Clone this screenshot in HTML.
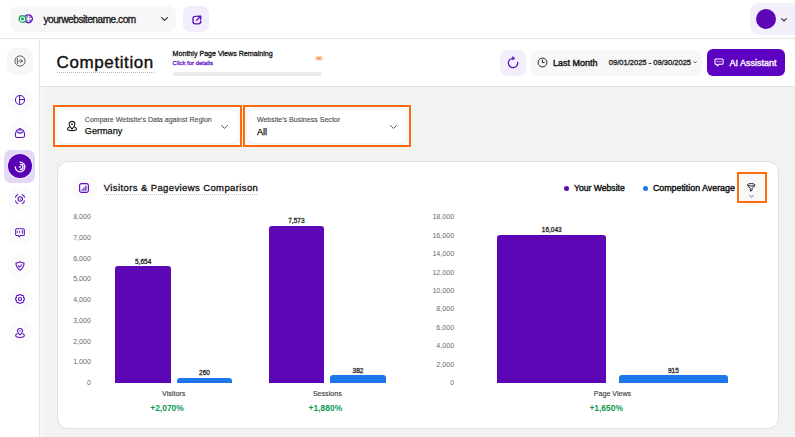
<!DOCTYPE html><html><head><meta charset='utf-8'><style>
*{margin:0;padding:0;box-sizing:border-box}
html,body{width:795px;height:437px;overflow:hidden;background:#f2f2f2;font-family:"Liberation Sans",sans-serif}
.t{position:absolute;line-height:1;white-space:nowrap}
.a{position:absolute}
svg{position:absolute;overflow:visible}
</style></head><body>
<div class="a" style="left:0;top:0;width:795px;height:39px;background:#fff;border-bottom:1px solid #e6e6e6"></div>
<div class="a" style="left:10px;top:6px;width:166px;height:26px;background:#f7f7f8;border-radius:8px"></div>
<svg style="left:15px;top:8px" width="25" height="22" viewBox="0 0 25 22">
<circle cx="13.4" cy="10.8" r="3.9" fill="#a88ae6" stroke="#5a10be" stroke-width="1.35"/>
<path d="M13.4 7.4 V14.2 M9.8 10.8 H17" stroke="#fff" stroke-width="1"/>
<circle cx="7.5" cy="11" r="3.3" fill="#fff" stroke="#1faa66" stroke-width="1.35"/>
<circle cx="7.5" cy="11" r="1.45" fill="#0f9a52"/>
</svg>
<div class="t" style="left:43.40px;top:14.95px;font-size:10.1px;font-weight:400;color:#1a1a1a;letter-spacing:-0.45px;-webkit-text-stroke:0.35px #1a1a1a">yourwebsitename.com</div>

<svg style="left:160.5px;top:17px" width="7" height="4" viewBox="0 0 7 4"><path d="M0.6 0.6 L3.5 3.4 L6.4 0.6" fill="none" stroke="#333" stroke-width="1.2" stroke-linecap="round" stroke-linejoin="round"/></svg>
<div class="a" style="left:183px;top:6px;width:26px;height:26px;background:#f2edfc;border-radius:7px"></div>
<svg style="left:191.6px;top:14.6px" width="10" height="10" viewBox="0 0 10 10">
<path d="M4.3 1.3 H3.3 Q1 1.3 1 3.6 V6.6 Q1 8.9 3.3 8.9 H6.4 Q8.7 8.9 8.7 6.6 V5.9" fill="none" stroke="#5a10be" stroke-width="1.35" stroke-linecap="round"/>
<path d="M4.7 5.3 L8.2 1.8" fill="none" stroke="#5a10be" stroke-width="1.35" stroke-linecap="round"/>
<path d="M5.7 1.3 H8.7 V4.3" fill="none" stroke="#5a10be" stroke-width="1.4" stroke-linecap="round" stroke-linejoin="round"/>
</svg>
<div class="a" style="left:750px;top:3px;width:50px;height:32px;background:#f3effa;border-radius:9px"></div>
<div class="a" style="left:756px;top:9px;width:20px;height:20px;background:#5c06b6;border-radius:50%"></div>
<svg style="left:781px;top:17.5px" width="6" height="3.5" viewBox="0 0 6 3.5"><path d="M0.6 0.6 L3.0 2.9 L5.4 0.6" fill="none" stroke="#333" stroke-width="1.2" stroke-linecap="round" stroke-linejoin="round"/></svg>
<div class="a" style="left:0;top:39px;width:40px;height:398px;background:#fff;border-right:1px solid #e6e6e6"></div>
<div class="a" style="left:7px;top:48px;width:26px;height:26.5px;background:#f7f7f7;border-radius:8px"></div>
<svg style="left:14px;top:54.6px" width="12" height="12" viewBox="0 0 12 12">
<circle cx="6" cy="6" r="5.1" fill="none" stroke="#555" stroke-width="0.95"/>
<path d="M3.4 3.4 V8.6" stroke="#555" stroke-width="0.95" stroke-linecap="round"/>
<path d="M4.9 6 H8.3 M6.6 4.4 L8.3 6 L6.6 7.6" fill="none" stroke="#555" stroke-width="0.95" stroke-linecap="round" stroke-linejoin="round"/>
</svg>
<div class="a" style="left:7.60px;top:87.50px;width:25px;height:25px;background:#fbfbfb;border-radius:50%"></div>
<svg style="left:15.10px;top:95.00px" width="10" height="10" viewBox="0 0 10 10"><circle cx="5" cy="5" r="4.55" fill="none" stroke="#5a12c0" stroke-width="1.05"/><path d="M4.6 0.6 V9.4 M4.6 4.5 H9.4" stroke="#5a12c0" stroke-width="1.05" fill="none"/></svg>
<div class="a" style="left:7.60px;top:120.80px;width:25px;height:25px;background:#fbfbfb;border-radius:50%"></div>
<svg style="left:15.10px;top:128.30px" width="10" height="10" viewBox="0 0 10 10"><path d="M2.6 1.9 H7.4 Q8.2 1.9 8.6 2.8 L9.3 5 Q9.6 6 9.6 7.1 V7.6 Q9.6 9.5 7.7 9.5 H2.3 Q0.4 9.5 0.4 7.6 V7.1 Q0.4 6 0.7 5 L1.4 2.8 Q1.8 1.9 2.6 1.9 Z" fill="none" stroke="#5a12c0" stroke-width="1.05" stroke-linejoin="round"/><path d="M3.7 1.9 Q3.7 0.5 5 0.5 Q6.3 0.5 6.3 1.9" fill="none" stroke="#5a12c0" stroke-width="1.05"/><path d="M2.4 4 Q5 6.3 7.6 4" fill="none" stroke="#5a12c0" stroke-width="1.05" stroke-linecap="round"/></svg>
<div class="a" style="left:4.3px;top:149.7px;width:31px;height:33px;background:#e4d8f6;border-radius:7px"></div>
<div class="a" style="left:7.3px;top:153.3px;width:26px;height:26px;background:#efe8fb;border-radius:50%"></div>
<div class="a" style="left:8.3px;top:154.3px;width:24px;height:24px;background:#5800b6;border-radius:50%"></div>
<svg style="left:14.3px;top:160.5px" width="12" height="12" viewBox="0 0 12 12">
<path d="M6.1 1.2 A4.8 4.8 0 1 1 1.3 6" fill="none" stroke="#fff" stroke-width="1.3" stroke-linecap="round"/>
<path d="M6.4 3.4 A2.55 2.55 0 0 1 6.4 8.5" fill="none" stroke="#fff" stroke-width="1.3" stroke-linecap="round"/>
<path d="M5.3 5.9 H6.5" stroke="#fff" stroke-width="1.3" stroke-linecap="round"/>
</svg>
<div class="a" style="left:7.60px;top:186.90px;width:25px;height:25px;background:#fbfbfb;border-radius:50%"></div>
<svg style="left:15.10px;top:194.40px" width="10" height="10" viewBox="0 0 10 10"><path d="M0.6 3.3 Q0.6 1.2 2.8 0.7 M7.2 0.7 Q9.4 1.2 9.4 3.3 M9.4 6.7 Q9.4 8.8 7.2 9.4 M2.8 9.4 Q0.6 8.8 0.6 6.7" fill="none" stroke="#5a12c0" stroke-width="1.05" stroke-linecap="round"/><circle cx="5.3" cy="5" r="2.2" fill="none" stroke="#5a12c0" stroke-width="1.05"/><circle cx="5.4" cy="5.1" r="0.65" fill="#5a12c0"/></svg>
<div class="a" style="left:7.60px;top:220.10px;width:25px;height:25px;background:#fbfbfb;border-radius:50%"></div>
<svg style="left:15.10px;top:227.60px" width="10" height="10" viewBox="0 0 10 10"><path d="M1.8 0.8 H8.2 Q9.3 0.8 9.3 1.9 V6.4 Q9.3 7.5 8.2 7.5 H5.2 L4.2 8.9 L3.2 7.5 H1.8 Q0.7 7.5 0.7 6.4 V1.9 Q0.7 0.8 1.8 0.8 Z" fill="none" stroke="#5a12c0" stroke-width="1.05" stroke-linejoin="round"/><path d="M2.4 3.6 V4.4 M4.5 3.6 V4.4 M7.3 2.5 V5.3" stroke="#5a12c0" stroke-width="1" stroke-linecap="round"/></svg>
<div class="a" style="left:7.60px;top:253.50px;width:25px;height:25px;background:#fbfbfb;border-radius:50%"></div>
<svg style="left:15.10px;top:261.00px" width="10" height="10" viewBox="0 0 10 10"><path d="M5 0.6 L6 1.3 Q7.4 2 9 2.1 Q9.2 6.4 5 9.4 Q0.8 6.4 1 2.1 Q2.6 2 4 1.3 Z" fill="none" stroke="#5a12c0" stroke-width="1.05" stroke-linejoin="round"/><path d="M3.2 4.9 L4.5 6 L6.7 3.9" fill="none" stroke="#5a12c0" stroke-width="1.05" stroke-linecap="round" stroke-linejoin="round"/></svg>
<div class="a" style="left:7.60px;top:286.90px;width:25px;height:25px;background:#fbfbfb;border-radius:50%"></div>
<svg style="left:15.10px;top:294.40px" width="10" height="10" viewBox="0 0 10 10"><path d="M5 0.5 Q6.2 0.5 6.6 1.6 Q7.7 1.1 8.5 2 Q9.1 2.9 8.4 3.6 Q9.5 4.2 9.5 5 Q9.5 5.8 8.4 6.4 Q9.1 7.1 8.5 8 Q7.7 8.9 6.6 8.4 Q6.2 9.5 5 9.5 Q3.8 9.5 3.4 8.4 Q2.3 8.9 1.5 8 Q0.9 7.1 1.6 6.4 Q0.5 5.8 0.5 5 Q0.5 4.2 1.6 3.6 Q0.9 2.9 1.5 2 Q2.3 1.1 3.4 1.6 Q3.8 0.5 5 0.5 Z" fill="none" stroke="#5a12c0" stroke-width="1.1" stroke-linejoin="round"/><circle cx="5" cy="5" r="1.6" fill="none" stroke="#5a12c0" stroke-width="1.05"/></svg>
<div class="a" style="left:7.60px;top:320.00px;width:25px;height:25px;background:#fbfbfb;border-radius:50%"></div>
<svg style="left:15.10px;top:327.50px" width="10" height="10" viewBox="0 0 10 10"><path d="M5 6.9 Q2.5 4.6 2.5 2.9 A2.5 2.5 0 0 1 7.5 2.9 Q7.5 4.6 5 6.9 Z" fill="none" stroke="#5a12c0" stroke-width="1.05" stroke-linejoin="round"/><circle cx="5" cy="2.9" r="0.7" fill="#5a12c0"/><path d="M2.2 5.8 Q0.6 6.6 0.6 7.5 Q0.6 9.4 5 9.4 Q9.4 9.4 9.4 7.5 Q9.4 6.6 7.8 5.8" fill="none" stroke="#5a12c0" stroke-width="1.05" stroke-linecap="round"/></svg>
<div class="a" style="left:40px;top:87px;width:4px;height:350px;background:#f6f6f6"></div>
<div class="a" style="left:40px;top:39px;width:755px;height:48px;background:#fff;border-bottom:1px solid #e3e3e3"></div>
<div class="t" style="left:56.60px;top:53.61px;font-size:17px;font-weight:400;color:#111;letter-spacing:0.6px;-webkit-text-stroke:0.4px #111">Competition</div>

<div class="a" style="left:57px;top:72px;width:97px;height:1px;background:repeating-linear-gradient(90deg,#b8b8b8 0 1px,transparent 1px 2px)"></div>
<div class="t" style="left:172.60px;top:50.79px;font-size:7.1px;font-weight:400;color:#1a1a1a;-webkit-text-stroke:0.3px #1a1a1a">Monthly Page Views Remaining</div>

<div class="t" style="left:172.60px;top:60.96px;font-size:5.95px;font-weight:400;color:#6a1fd0;-webkit-text-stroke:0.3px #6a1fd0">Click for details</div>

<div class="a" style="left:172.5px;top:72px;width:149.5px;height:4px;background:#ebebeb;border-radius:2px"></div>
<svg style="left:315px;top:56px" width="8" height="5" viewBox="0 0 8 5">
<circle cx="2.6" cy="2.35" r="1.35" fill="none" stroke="#ff6a0c" stroke-width="0.95"/>
<circle cx="5.4" cy="2.35" r="1.35" fill="none" stroke="#ff6a0c" stroke-width="0.95"/>
</svg>
<div class="a" style="left:500px;top:49.5px;width:26px;height:26px;background:#f3eefc;border-radius:7px"></div>
<svg style="left:506.6px;top:56.8px" width="12" height="12" viewBox="0 0 12 12">
<path d="M6.2 1.3 A4.7 4.7 0 1 0 10.7 5.4" fill="none" stroke="#5a10be" stroke-width="1.25" stroke-linecap="round"/>
<path d="M5.6 -0.4 L7.9 1.3 L5.6 3 Z" fill="#5a10be" stroke="#5a10be" stroke-width="0.5" stroke-linejoin="round"/>
</svg>
<div class="a" style="left:531px;top:49.5px;width:171px;height:26px;background:#f7f7f8;border-radius:7px"></div>
<svg style="left:537px;top:57px" width="11" height="11" viewBox="0 0 11 11">
<circle cx="5.5" cy="5.5" r="4.4" fill="none" stroke="#222" stroke-width="1"/>
<path d="M5.4 3 V5.6 H7.2" fill="none" stroke="#222" stroke-width="1" stroke-linecap="round" stroke-linejoin="round"/>
</svg>
<div class="t" style="left:553.00px;top:58.78px;font-size:9.0px;font-weight:400;color:#111;-webkit-text-stroke:0.4px #111">Last Month</div>

<div class="t" style="left:608.80px;top:58.51px;font-size:7.55px;font-weight:400;color:#2a2a2a;-webkit-text-stroke:0.35px #2a2a2a">09/01/2025 - 09/30/2025</div>

<svg style="left:693.3px;top:61px" width="4" height="2.5" viewBox="0 0 4 2.5"><path d="M0.6 0.6 L2.0 1.9 L3.4 0.6" fill="none" stroke="#555" stroke-width="0.9" stroke-linecap="round" stroke-linejoin="round"/></svg>
<div class="a" style="left:707px;top:49.4px;width:78px;height:26.5px;background:#5e02c2;border-radius:6px"></div>
<svg style="left:713.5px;top:58px" width="10" height="9" viewBox="0 0 10 9">
<path d="M2 0.9 H8.1 Q9.1 0.9 9.1 1.9 V5.3 Q9.1 6.3 8.1 6.3 H4.8 L3.3 7.9 L2.9 6.3 H2 Q1 6.3 1 5.3 V1.9 Q1 0.9 2 0.9 Z" fill="none" stroke="#fff" stroke-width="1.05" stroke-linejoin="round"/>
<circle cx="3.2" cy="3.7" r="0.6" fill="#fff"/><circle cx="5.1" cy="3.7" r="0.6" fill="#fff"/><circle cx="7" cy="3.7" r="0.6" fill="#fff"/>
</svg>
<div class="t" style="left:729.60px;top:59.28px;font-size:9.0px;font-weight:400;color:#fff;-webkit-text-stroke:0.35px #fff">AI Assistant</div>

<div class="a" style="left:52.5px;top:105.1px;width:189.0px;height:42.2px;border:2.85px solid #ff6a0c;background:#f6fafb"></div>
<div class="a" style="left:56.5px;top:109.5px;width:181.0px;height:33.3px;background:#fff;border-radius:7px;box-shadow:0 0 1.5px rgba(0,0,0,0.12)"></div>
<svg style="left:66.6px;top:121.4px" width="10" height="10" viewBox="0 0 10 10">
<path d="M5 8.1 Q2.1 5.4 2.1 3.3 A2.9 2.9 0 0 1 7.9 3.3 Q7.9 5.4 5 8.1 Z" fill="none" stroke="#1e1e1e" stroke-width="1.1" stroke-linejoin="round"/>
<circle cx="5" cy="3.2" r="0.85" fill="#1e1e1e"/>
<path d="M2.1 6.3 Q0.5 7 0.5 7.9 Q0.5 9.6 5 9.6 Q9.5 9.6 9.5 7.9 Q9.5 7 7.9 6.3" fill="none" stroke="#1e1e1e" stroke-width="1.1" stroke-linecap="round"/>
</svg>
<div class="t" style="left:84.80px;top:116.43px;font-size:7.05px;font-weight:400;color:#4a4a4a;-webkit-text-stroke:0.1px #4a4a4a">Compare Website's Data against Region</div>

<div class="t" style="left:84.80px;top:127.05px;font-size:9.15px;font-weight:400;color:#111;-webkit-text-stroke:0.25px #111">Germany</div>

<svg style="left:220.5px;top:124.5px" width="7" height="4" viewBox="0 0 7 4"><path d="M0.6 0.6 L3.5 3.4 L6.4 0.6" fill="none" stroke="#555" stroke-width="1" stroke-linecap="round" stroke-linejoin="round"/></svg>
<div class="a" style="left:242.6px;top:105.1px;width:168.4px;height:42.2px;border:2.85px solid #ff6a0c;background:#f6fafb"></div>
<div class="a" style="left:246.6px;top:109.5px;width:160.4px;height:33.3px;background:#fff;border-radius:7px;box-shadow:0 0 1.5px rgba(0,0,0,0.12)"></div>
<div class="t" style="left:256.90px;top:116.22px;font-size:7.07px;font-weight:400;color:#4a4a4a;-webkit-text-stroke:0.1px #4a4a4a">Website's Business Sector</div>

<div class="t" style="left:256.90px;top:127.81px;font-size:9.2px;font-weight:400;color:#111;-webkit-text-stroke:0.25px #111">All</div>

<svg style="left:389.5px;top:124.5px" width="7" height="4" viewBox="0 0 7 4"><path d="M0.6 0.6 L3.5 3.4 L6.4 0.6" fill="none" stroke="#555" stroke-width="1" stroke-linecap="round" stroke-linejoin="round"/></svg>
<div class="a" style="left:56.5px;top:161px;width:722px;height:267.5px;background:#fff;border:1px solid #e2e2e2;border-radius:11px"></div>
<div class="a" style="left:71.8px;top:175.4px;width:25px;height:25px;background:#fafafa;border-radius:50%"></div>
<svg style="left:78.8px;top:182.9px" width="10" height="10" viewBox="0 0 10 10">
<rect x="0.6" y="0.6" width="8.8" height="8.8" rx="1.9" fill="none" stroke="#5a10be" stroke-width="1.15"/>
<path d="M3.1 7.3 V6.6 M5 7.3 V4.9 M6.9 7.3 V3" stroke="#5a10be" stroke-width="1.2" stroke-linecap="round"/>
</svg>
<div class="t" style="left:103.80px;top:182.96px;font-size:9.5px;font-weight:400;color:#111;letter-spacing:0.39px;-webkit-text-stroke:0.3px #111">Visitors &amp; Pageviews Comparison</div>

<div class="a" style="left:104px;top:194.2px;width:154px;height:1px;background:repeating-linear-gradient(90deg,#c4c4c4 0 1px,transparent 1px 2px)"></div>
<div class="a" style="left:563.8px;top:186px;width:5px;height:5px;background:#5a0bb5;border-radius:50%"></div>
<div class="t" style="left:574.10px;top:184.02px;font-size:8.6px;font-weight:400;color:#111;-webkit-text-stroke:0.4px #111">Your Website</div>

<div class="a" style="left:643.3px;top:185.7px;width:5px;height:5px;background:#1d76ea;border-radius:50%"></div>
<div class="t" style="left:652.90px;top:183.80px;font-size:8.86px;font-weight:400;color:#111;-webkit-text-stroke:0.4px #111">Competition Average</div>

<div class="a" style="left:737px;top:172.4px;width:29.6px;height:31.1px;border:2.75px solid #ff6a0c;background:#f8f8f8"></div>
<svg style="left:746.7px;top:183.2px" width="9" height="9" viewBox="0 0 9 9">
<ellipse cx="4.2" cy="1.8" rx="3.6" ry="1.25" fill="none" stroke="#1e1e1e" stroke-width="0.95"/>
<path d="M0.6 1.9 Q0.9 3.4 3.3 5.4 V8.2 L5.1 7.3 V5.4 Q7.5 3.4 7.8 1.9" fill="none" stroke="#1e1e1e" stroke-width="0.95" stroke-linejoin="round"/>
</svg>
<svg style="left:749px;top:195px" width="5" height="2.8" viewBox="0 0 5 2.8"><path d="M0.6 0.6 L2.5 2.1999999999999997 L4.4 0.6" fill="none" stroke="#555" stroke-width="0.8" stroke-linecap="round" stroke-linejoin="round"/></svg>
<div class="t" style="right:704.10px;top:380.19px;font-size:7.1px;font-weight:400;color:#6b6b6b;">0</div>

<div class="t" style="right:704.10px;top:359.44px;font-size:7.1px;font-weight:400;color:#6b6b6b;">1,000</div>

<div class="t" style="right:704.10px;top:338.69px;font-size:7.1px;font-weight:400;color:#6b6b6b;">2,000</div>

<div class="t" style="right:704.10px;top:317.94px;font-size:7.1px;font-weight:400;color:#6b6b6b;">3,000</div>

<div class="t" style="right:704.10px;top:297.19px;font-size:7.1px;font-weight:400;color:#6b6b6b;">4,000</div>

<div class="t" style="right:704.10px;top:276.44px;font-size:7.1px;font-weight:400;color:#6b6b6b;">5,000</div>

<div class="t" style="right:704.10px;top:255.69px;font-size:7.1px;font-weight:400;color:#6b6b6b;">6,000</div>

<div class="t" style="right:704.10px;top:234.94px;font-size:7.1px;font-weight:400;color:#6b6b6b;">7,000</div>

<div class="t" style="right:704.10px;top:214.19px;font-size:7.1px;font-weight:400;color:#6b6b6b;">8,000</div>

<div class="t" style="right:340.90px;top:380.19px;font-size:7.1px;font-weight:400;color:#6b6b6b;">0</div>

<div class="t" style="right:340.90px;top:361.75px;font-size:7.1px;font-weight:400;color:#6b6b6b;">2,000</div>

<div class="t" style="right:340.90px;top:343.30px;font-size:7.1px;font-weight:400;color:#6b6b6b;">4,000</div>

<div class="t" style="right:340.90px;top:324.86px;font-size:7.1px;font-weight:400;color:#6b6b6b;">6,000</div>

<div class="t" style="right:340.90px;top:306.41px;font-size:7.1px;font-weight:400;color:#6b6b6b;">8,000</div>

<div class="t" style="right:340.90px;top:287.97px;font-size:7.1px;font-weight:400;color:#6b6b6b;">10,000</div>

<div class="t" style="right:340.90px;top:269.52px;font-size:7.1px;font-weight:400;color:#6b6b6b;">12,000</div>

<div class="t" style="right:340.90px;top:251.08px;font-size:7.1px;font-weight:400;color:#6b6b6b;">14,000</div>

<div class="t" style="right:340.90px;top:232.63px;font-size:7.1px;font-weight:400;color:#6b6b6b;">16,000</div>

<div class="t" style="right:340.90px;top:214.19px;font-size:7.1px;font-weight:400;color:#6b6b6b;">18,000</div>

<div class="a" style="left:115.30px;top:266.00px;width:55.70px;height:116.80px;background:#5c06b6;border-radius:3px 3px 0 0"></div>
<div class="t" style="left:43.15px;width:200px;text-align:center;top:258.60px;font-size:6.5px;font-weight:400;color:#2a2a2a;-webkit-text-stroke:0.3px #2a2a2a">5,654</div>

<div class="a" style="left:177.10px;top:377.60px;width:54.90px;height:5.20px;background:#1d76ea;border-radius:3px 3px 0 0"></div>
<div class="t" style="left:104.55px;width:200px;text-align:center;top:370.20px;font-size:6.5px;font-weight:400;color:#2a2a2a;-webkit-text-stroke:0.3px #2a2a2a">260</div>

<div class="a" style="left:269.00px;top:225.70px;width:54.80px;height:157.10px;background:#5c06b6;border-radius:3px 3px 0 0"></div>
<div class="t" style="left:196.40px;width:200px;text-align:center;top:218.30px;font-size:6.5px;font-weight:400;color:#2a2a2a;-webkit-text-stroke:0.3px #2a2a2a">7,573</div>

<div class="a" style="left:330.20px;top:375.10px;width:55.60px;height:7.70px;background:#1d76ea;border-radius:3px 3px 0 0"></div>
<div class="t" style="left:258.00px;width:200px;text-align:center;top:367.70px;font-size:6.5px;font-weight:400;color:#2a2a2a;-webkit-text-stroke:0.3px #2a2a2a">382</div>

<div class="a" style="left:497.20px;top:234.80px;width:109.10px;height:148.00px;background:#5c06b6;border-radius:3px 3px 0 0"></div>
<div class="t" style="left:451.75px;width:200px;text-align:center;top:227.40px;font-size:6.5px;font-weight:400;color:#2a2a2a;-webkit-text-stroke:0.3px #2a2a2a">16,043</div>

<div class="a" style="left:618.90px;top:375.00px;width:109.10px;height:7.80px;background:#1d76ea;border-radius:3px 3px 0 0"></div>
<div class="t" style="left:573.45px;width:200px;text-align:center;top:367.60px;font-size:6.5px;font-weight:400;color:#2a2a2a;-webkit-text-stroke:0.3px #2a2a2a">915</div>

<div class="t" style="left:73.70px;width:200px;text-align:center;top:391.19px;font-size:7.1px;font-weight:400;color:#444;-webkit-text-stroke:0.15px #444">Visitors</div>

<div class="t" style="left:227.30px;width:200px;text-align:center;top:391.19px;font-size:7.1px;font-weight:400;color:#444;-webkit-text-stroke:0.15px #444">Sessions</div>

<div class="t" style="left:512.50px;width:200px;text-align:center;top:391.39px;font-size:7.1px;font-weight:400;color:#444;-webkit-text-stroke:0.15px #444">Page Views</div>

<div class="t" style="left:67.00px;width:200px;text-align:center;top:403.65px;font-size:8.45px;font-weight:700;color:#0b9a52;">+2,070%</div>

<div class="t" style="left:225.40px;width:200px;text-align:center;top:403.85px;font-size:8.45px;font-weight:700;color:#0b9a52;">+1,880%</div>

<div class="t" style="left:506.20px;width:200px;text-align:center;top:404.05px;font-size:8.45px;font-weight:700;color:#0b9a52;">+1,650%</div>

</body></html>
